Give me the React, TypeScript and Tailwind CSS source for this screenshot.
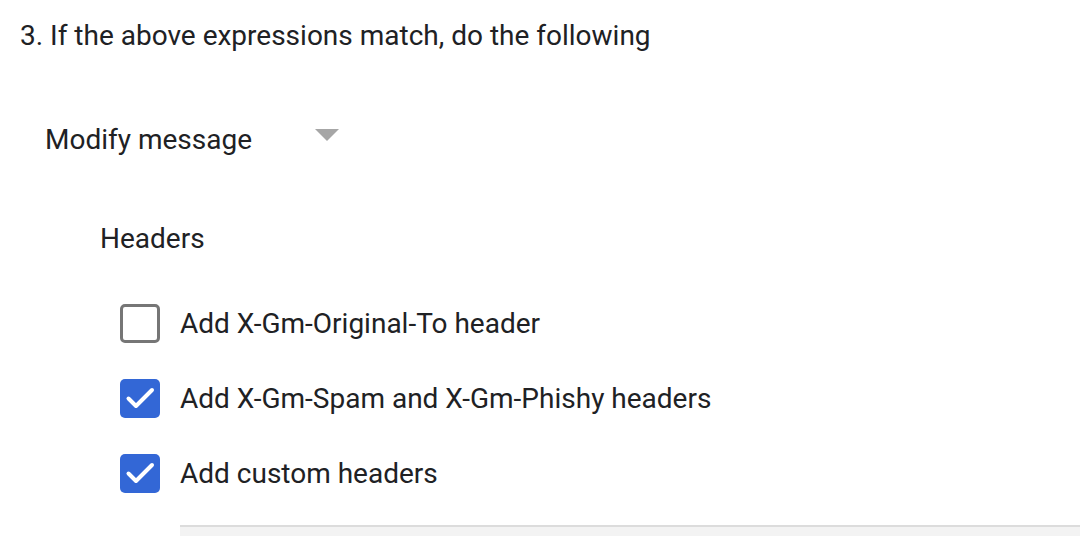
function Option({ label, checked }: { label: string; checked: boolean }) {
  return (
    <div className="flex items-center h-[75px]">
      {checked ? (
        <div className="w-[40px] h-[39px] rounded-[5px] bg-[#3367d6]">
          <svg width="40" height="39" viewBox="0 0 40 39">
            <polyline
              points="8.5,19.5 16,27 32,11"
              fill="none"
              stroke="#fff"
              strokeWidth="4"
              strokeLinecap="round"
              strokeLinejoin="round"
            />
          </svg>
        </div>
      ) : (
        <div className="w-[40px] h-[39px] rounded-[5px] border-[3px] border-[#767676] bg-white" />
      )}
      <span className="ml-[20px]">{label}</span>
    </div>
  )
}

export default function App() {
  return (
    <div className="w-[1080px] h-[536px] overflow-hidden bg-white text-[#202124] font-['Roboto',sans-serif] text-[28px] leading-none">
      <div className="pl-[20px] pt-[22px]">3. If the above expressions match, do the following</div>

      <div className="flex items-start pl-[45px] mt-[76px]">
        <span className="w-[270px]">Modify message</span>
        <svg className="mt-[3px]" width="24" height="12" viewBox="0 0 24 12">
          <path d="M0 0 L24 0 L12 12 Z" fill="#a6a6a6" />
        </svg>
      </div>

      <div className="pl-[100px] mt-[71px]">Headers</div>

      <div className="pl-[120px] mt-[33px]">
        <Option label="Add X-Gm-Original-To header" checked={false} />
        <Option label="Add X-Gm-Spam and X-Gm-Phishy headers" checked />
        <Option label="Add custom headers" checked />
      </div>

      <div className="ml-[180px] mt-[14px] h-[40px] bg-[#f3f3f3] border-t-2 border-[#dcdcdc]" />
    </div>
  )
}
